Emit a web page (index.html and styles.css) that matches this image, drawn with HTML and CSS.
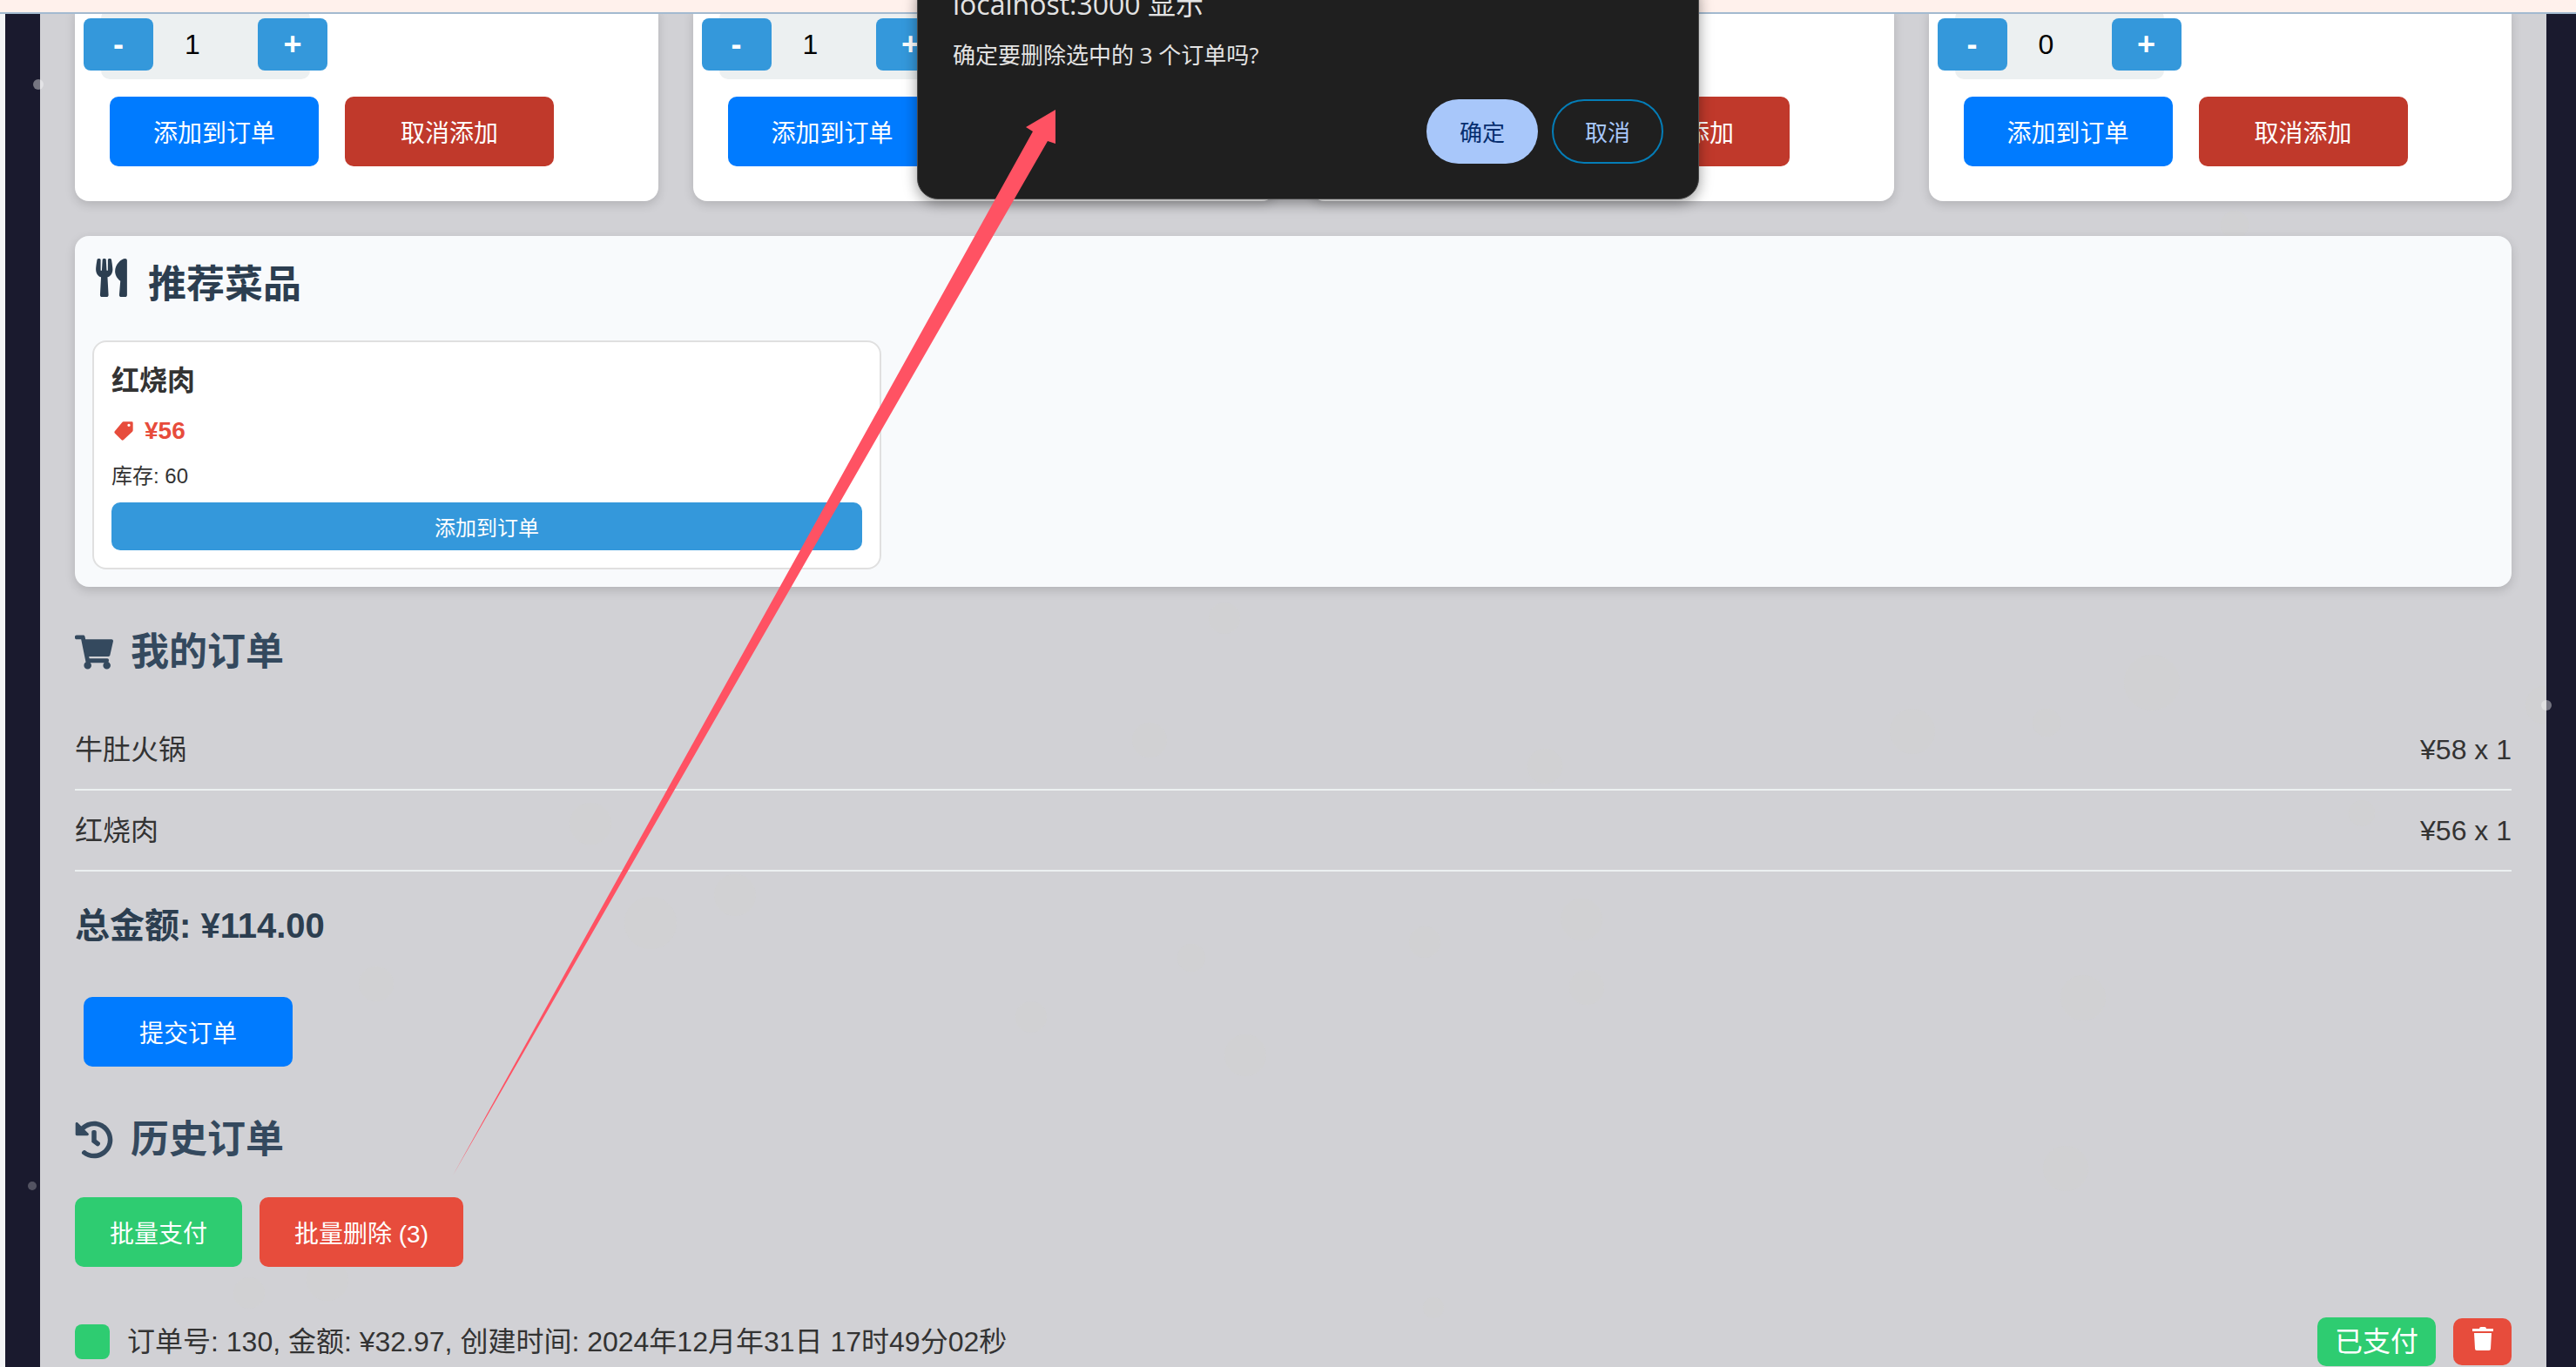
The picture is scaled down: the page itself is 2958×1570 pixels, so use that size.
FILE: index.html
```html
<!DOCTYPE html>
<html lang="zh-CN">
<head>
<meta charset="utf-8">
<title>点餐</title>
<link rel="stylesheet" href="styles.css">
</head>
<body>
<div class="window">
  <div class="browser-edge"></div>
  <div class="page">
    <svg class="particles" aria-hidden="true" fill="#fff">
      <circle cx="38" cy="81" r="6" fill-opacity=".4"/>
      <circle cx="31" cy="1346" r="5" fill-opacity=".25"/>
      <circle cx="2918" cy="794" r="6" fill-opacity=".4"/>
    </svg>
    <main class="panel">
      <svg class="particles" aria-hidden="true" fill="#d8d8c8" fill-opacity=".14">
        <circle cx="2425" cy="768" r="32"/><circle cx="1360" cy="694" r="18"/>
        <circle cx="1274" cy="834" r="20"/><circle cx="1728" cy="864" r="20"/>
        <circle cx="2150" cy="824" r="26"/><circle cx="2304" cy="814" r="16"/>
        <circle cx="2666" cy="918" r="15"/><circle cx="1770" cy="1040" r="24"/>
        <circle cx="1776" cy="1118" r="20"/><circle cx="1590" cy="1066" r="18"/>
        <circle cx="701" cy="1044" r="30"/><circle cx="798" cy="1012" r="24"/>
        <circle cx="1322" cy="1084" r="16"/><circle cx="1138" cy="1152" r="18"/>
        <circle cx="1384" cy="1196" r="24"/><circle cx="2346" cy="1130" r="26"/>
        <circle cx="2326" cy="1326" r="26"/><circle cx="632" cy="930" r="24"/>
        <circle cx="386" cy="1114" r="20"/><circle cx="240" cy="1469" r="18"/>
        <circle cx="330" cy="1454" r="24"/><circle cx="1600" cy="1486" r="12"/>
        <circle cx="2876" cy="794" r="22"/><circle cx="2520" cy="242" r="16"/>
      </svg>
      <div class="dishes">
        <section class="dish">
          <div class="qty">
            <button class="step" type="button">-</button>
            <input class="count" type="number" value="1" aria-label="数量">
            <button class="step" type="button">+</button>
          </div>
          <div class="actions">
            <button class="btn primary wide" type="button">添加到订单</button>
            <button class="btn cancel wide" type="button">取消添加</button>
          </div>
        </section>
        <section class="dish">
          <div class="qty">
            <button class="step" type="button">-</button>
            <input class="count" type="number" value="1" aria-label="数量">
            <button class="step" type="button">+</button>
          </div>
          <div class="actions">
            <button class="btn primary wide" type="button">添加到订单</button>
            <button class="btn cancel wide" type="button" aria-label="取消添加"></button>
          </div>
        </section>
        <section class="dish">
          <div class="qty">
            <button class="step" type="button">-</button>
            <input class="count" type="number" value="0" aria-label="数量">
            <button class="step" type="button">+</button>
          </div>
          <div class="actions">
            <button class="btn primary wide" type="button" aria-label="添加到订单"></button>
            <button class="btn cancel wide" type="button">取消添加</button>
          </div>
        </section>
        <section class="dish">
          <div class="qty">
            <button class="step" type="button">-</button>
            <input class="count" type="number" value="0" aria-label="数量">
            <button class="step" type="button">+</button>
          </div>
          <div class="actions">
            <button class="btn primary wide" type="button">添加到订单</button>
            <button class="btn cancel wide" type="button">取消添加</button>
          </div>
        </section>
      </div>

      <section class="recommend">
        <h2 class="recommend-title">
          <svg class="icon" viewBox="0 0 416 512" aria-hidden="true"><path d="M207.9 15.2c.8 4.7 16.1 94.5 16.1 128.8 0 52.3-27.8 89.6-68.9 104.6L168 486.7c.7 13.7-10.2 25.3-24 25.3H80c-13.7 0-24.7-11.5-24-25.3l12.9-238.1C27.7 233.6 0 196.2 0 144 0 109.6 15.3 19.9 16.1 15.2 19.3-5.1 61.4-5.4 64 16.3v141.2c1.3 3.4 15.1 3.2 16 0 1.4-25.3 7.9-139.2 8-141.8 3.3-20.8 44.7-20.8 47.9 0 .2 2.7 6.6 116.5 8 141.8.9 3.2 14.8 3.4 16 0V16.3c2.6-21.6 44.8-21.4 48-1.1zm119.2 285.7l-15 185.1c-1.2 14 9.9 26 23.9 26h56c13.3 0 24-10.7 24-24V24c0-13.2-10.7-24-24-24-82.5 0-221.4 178.5-64.9 300.9z"/></svg>
          推荐菜品
        </h2>
        <div class="recommend-grid">
          <article class="pick">
            <h3 class="pick-name">红烧肉</h3>
            <p class="pick-price">
              <svg class="tag" viewBox="0 0 66 66" aria-hidden="true"><path fill-rule="evenodd" d="M32 1h29q4 0 4 4v25q0 3-2 5L33 63q-4 4-8 0L3 41q-4-4 0-8L28 3q2-2 4-2zM51 8a5 5 0 1 0 0 10 5 5 0 1 0 0-10z"/></svg>
              ¥56
            </p>
            <p class="pick-stock">库存: 60</p>
            <button class="pick-add" type="button">添加到订单</button>
          </article>
        </div>
      </section>

      <h2 class="section-title">
        <svg class="icon" viewBox="0 0 576 512" aria-hidden="true"><path d="M528.12 301.319l47.273-208C578.806 78.301 567.391 64 551.99 64H159.208l-9.166-44.81C147.758 8.021 137.93 0 126.529 0H24C10.745 0 0 10.745 0 24v16c0 13.255 10.745 24 24 24h69.883l70.248 343.435C147.325 417.1 136 435.222 136 456c0 30.928 25.072 56 56 56s56-25.072 56-56c0-15.674-6.447-29.835-16.824-40h209.647C430.447 426.165 424 440.326 424 456c0 30.928 25.072 56 56 56s56-25.072 56-56c0-22.172-12.888-41.332-31.579-50.405l5.517-24.276c3.413-15.018-8.002-29.319-23.403-29.319H218.117l-6.545-32h293.145c11.206 0 20.92-7.754 23.403-18.681z"/></svg>
        我的订单
      </h2>
      <ul class="lines">
        <li class="line"><span>牛肚火锅</span><span>¥58 x 1</span></li>
        <li class="line"><span>红烧肉</span><span>¥56 x 1</span></li>
      </ul>
      <p class="total">总金额: ¥114.00</p>
      <button class="btn primary wide submit" type="button">提交订单</button>

      <h2 class="section-title history-title">
        <svg class="icon" viewBox="0 0 512 512" aria-hidden="true"><path d="M504 255.531c.253 136.64-111.18 248.372-247.82 248.468-59.015.042-113.223-20.53-155.822-54.911-11.077-8.94-11.905-25.541-1.839-35.607l11.267-11.267c8.609-8.609 22.353-9.551 31.891-1.984C173.062 425.135 212.781 440 256 440c101.705 0 184-82.311 184-184 0-101.705-82.311-184-184-184-48.814 0-93.149 18.969-126.068 49.932l50.754 50.754c10.08 10.08 2.941 27.314-11.313 27.314H24c-8.837 0-16-7.163-16-16V38.627c0-14.254 17.234-21.393 27.314-11.314l49.372 49.372C129.209 34.136 189.552 8 256 8c136.81 0 247.747 110.78 248 247.531zm-180.912 78.784l9.823-12.63c8.138-10.463 6.253-25.542-4.21-33.679L288 256.349V152c0-13.255-10.745-24-24-24h-16c-13.255 0-24 10.745-24 24v135.651l65.409 50.874c10.463 8.137 25.541 6.253 33.679-4.21z"/></svg>
        历史订单
      </h2>
      <div class="batch">
        <button class="btn pay" type="button">批量支付</button>
        <button class="btn delete" type="button">批量删除 (3)</button>
      </div>
      <div class="order">
        <input class="tick" type="checkbox" id="order-130" checked>
        <label class="order-text" for="order-130">订单号: 130, 金额: ¥32.97, 创建时间: 2024年12月年31日 17时49分02秒</label>
        <span class="paid">已支付</span>
        <button class="trash" type="button" aria-label="删除">
          <svg class="trash-icon" viewBox="0 0 24 27" aria-hidden="true"><path d="M0 2h8q0-2 2-2h4q2 0 2 2h8v3H0zM2 7h20l-1 18q0 2-2 2H5q-2 0-2-2z"/></svg>
        </button>
      </div>
    </main>
  </div>

  <div class="dialog" role="dialog" aria-labelledby="dialog-title">
    <div class="dialog-title" id="dialog-title">localhost:3000 显示</div>
    <p class="dialog-text">确定要删除选中的 3 个订单吗?</p>
    <div class="dialog-actions">
      <button class="pill ok" type="button">确定</button>
      <button class="pill dismiss" type="button">取消</button>
    </div>
  </div>
  <svg class="arrow" viewBox="0 0 700 1230" aria-hidden="true"><path d="M692 6L658 26l8 5L0 1230 683 42l9 3z" fill="#ff5263"/></svg>
</div>
</body>
</html>
```

FILE: styles.css
```css
* { box-sizing: border-box; }

body {
  margin: 0;
  font-family: "Liberation Sans", "Noto Sans CJK SC", sans-serif;
  color: #333;
}

h2, h3, p, ul { margin: 0; padding: 0; }

button, input { font-family: inherit; margin: 0; border: 0; }

button { padding: 0; cursor: pointer; }

.window {
  position: relative;
  display: flex;
  flex-direction: column;
  height: 100vh;
  overflow: hidden;
}

.browser-edge {
  flex: none;
  height: 16px;
  background: #fff1ec;
  border-bottom: 2px solid #a3bad0;
}

.page {
  position: relative;
  flex: 1;
  min-height: 0;
  overflow: hidden;
  padding: 0 34px 0 40px;
  border-left: 6px solid #f3f4f6;
  background: #1a1a2e;
}

.particles {
  position: absolute;
  inset: 0;
  z-index: -1;
  width: 100%;
  height: 100%;
}

.page { isolation: isolate; }

.panel {
  position: relative;
  isolation: isolate;
  min-height: 100%;
  padding: 0 40px;
  background: rgba(255, 255, 255, .8);
  overflow: hidden;
}

.dishes {
  display: grid;
  grid-template-columns: repeat(4, 1fr);
  gap: 40px;
  margin-top: -5px;
}

.dish {
  padding: 0 30px 40px;
  border-radius: 0 0 16px 16px;
  background: #fff;
  box-shadow: 0 4px 12px rgba(0, 0, 0, .15);
}

.qty {
  display: flex;
  align-items: center;
  width: 240px;
  height: 80px;
  border-radius: 10px;
  background: #ecf0f1;
}

.step {
  flex: none;
  width: 80px;
  height: 60px;
  border-radius: 8px;
  background: #3498db;
  color: #fff;
  font-size: 36px;
  font-weight: 700;
  line-height: 60px;
}

.step:first-child { margin-left: -20px; }

.count {
  flex: none;
  width: 120px;
  height: 60px;
  padding: 0 30px 0 0;
  background: none;
  color: #000;
  font-size: 32px;
  text-align: center;
  appearance: textfield;
}

.count::-webkit-inner-spin-button { display: none; }

.actions {
  display: flex;
  gap: 30px;
  margin: 20px 0 0 10px;
}

.btn {
  height: 80px;
  padding: 0 40px;
  border-radius: 10px;
  color: #fff;
  font-size: 28px;
  white-space: nowrap;
}

.wide { width: 240px; }
.primary { background: #007bff; }
.cancel { background: #c0392b; }
.pay { background: #2ecc71; }
.delete { background: #e74c3c; }

.recommend {
  margin-top: 40px;
  padding: 20px;
  border-radius: 16px;
  background: #f8fafc;
  box-shadow: 0 4px 12px rgba(0, 0, 0, .15);
}

.icon {
  flex: none;
  width: 44px;
  height: 44px;
  fill: currentColor;
}

.recommend-title {
  display: flex;
  gap: 20px;
  padding-top: 6px;
  margin-bottom: 34px;
  color: #2c3e50;
  font-size: 44px;
  line-height: 60px;
}

.recommend-grid {
  display: grid;
  grid-template-columns: repeat(3, 1fr);
  gap: 20px;
}

.pick {
  display: flex;
  flex-direction: column;
  gap: 12px;
  padding: 20px;
  border: 2px solid #e0e0e0;
  border-radius: 16px;
  background: #fff;
}

.pick-name {
  font-size: 32px;
  line-height: 48px;
}

.pick-price {
  display: flex;
  align-items: center;
  gap: 13px;
  padding-left: 3px;
  color: #e74c3c;
  font-size: 28px;
  font-weight: 700;
  line-height: 44px;
}

.tag {
  width: 22px;
  height: 22px;
  fill: currentColor;
}

.pick-stock {
  font-size: 24px;
  line-height: 36px;
}

.pick-add {
  height: 55px;
  border-radius: 10px;
  background: #3498db;
  color: #fff;
  font-size: 24px;
}

.section-title {
  display: flex;
  align-items: center;
  gap: 20px;
  margin: 42px 0 33px;
  color: #34495e;
  font-size: 44px;
  line-height: 66px;
}

.lines { list-style: none; }

.line {
  display: flex;
  align-items: center;
  justify-content: space-between;
  height: 93px;
  border-bottom: 2px solid #ecf0f1;
  font-size: 32px;
  line-height: 48px;
}

.total {
  margin: 32px 0 52px;
  color: #2c3e50;
  font-size: 40px;
  font-weight: 700;
  line-height: 60px;
}

.submit {
  display: block;
  margin-left: 10px;
}

.history-title {
  margin-top: 51px;
}

.batch {
  display: flex;
  gap: 20px;
}

.order {
  display: flex;
  align-items: center;
  margin-top: 58px;
  font-size: 32px;
}

.tick {
  flex: none;
  width: 40px;
  height: 40px;
  border-radius: 8px;
  background: #2ecc71;
  appearance: none;
}

.order-text {
  flex: 1;
  padding-left: 20px;
  line-height: 48px;
}

.paid {
  height: 56px;
  padding: 0 20px;
  border-radius: 10px;
  background: #2ecc71;
  color: #fff;
  line-height: 56px;
}

.trash {
  display: flex;
  justify-content: center;
  width: 67px;
  height: 54px;
  margin-left: 20px;
  padding-top: 10px;
  border-radius: 10px;
  background: #e74c3c;
}

.trash-icon {
  width: 24px;
  height: 27px;
  fill: #fff;
}

.dialog {
  position: absolute;
  top: -24px;
  left: 1053px;
  width: 898px;
  padding: 0 40px 40px;
  border: 1px solid #4a4a4a;
  border-radius: 24px;
  background: #1f1f1f;
  box-shadow: 0 4px 16px rgba(0, 0, 0, .4);
  color: #e3e3e3;
  font-family: "Open Sans", "Noto Sans CJK SC", sans-serif;
}

.dialog-title {
  padding-top: 8px;
  font-size: 32px;
  line-height: 40px;
}

.dialog-text {
  margin-top: 20px;
  font-size: 26px;
  line-height: 36px;
}

.dialog-actions {
  display: flex;
  justify-content: flex-end;
  gap: 16px;
  margin-top: 33px;
}

.pill {
  width: 128px;
  height: 74px;
  border-radius: 37px;
  font-size: 26px;
}

.ok {
  background: #a8c7fa;
  color: #062e6f;
}

.dismiss {
  border: 2px solid #047db7;
  background: none;
  color: #a8c7fa;
}

.arrow {
  position: absolute;
  top: 120px;
  left: 520px;
  width: 700px;
  height: 1230px;
  pointer-events: none;
}
```
